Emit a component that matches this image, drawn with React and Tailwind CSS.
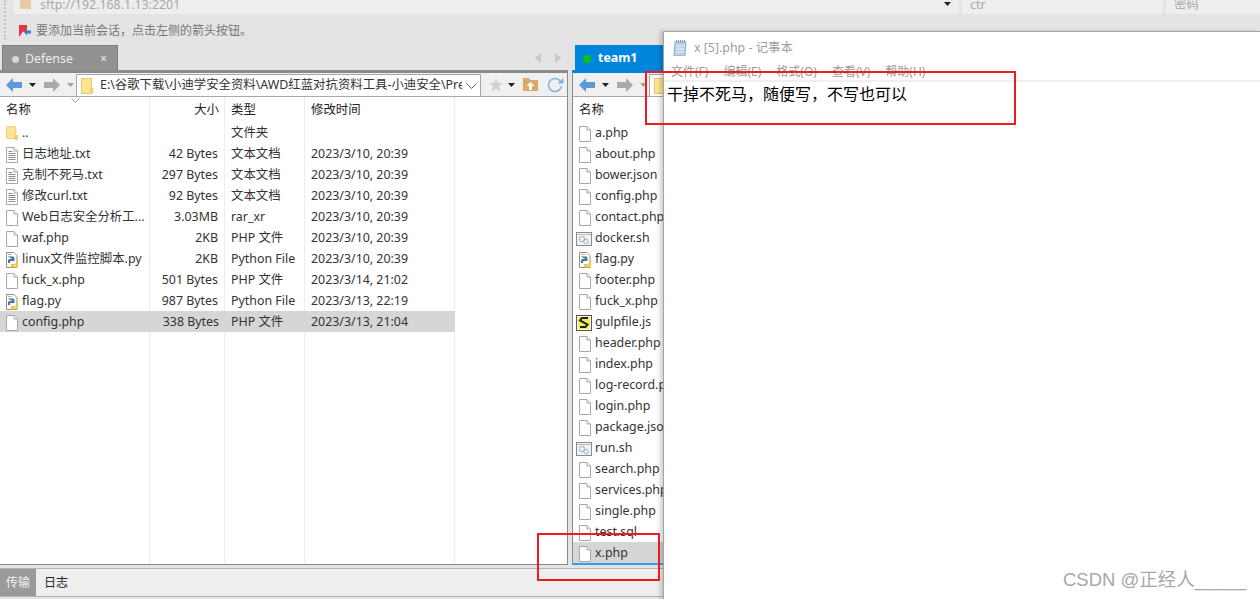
const uiFont = { fontFamily: '"Noto Sans", "Noto Sans CJK SC", sans-serif' };

const leftRows = [
  { name: "..", size: "", type: "文件夹", date: "", icon: "folder" },
  { name: "日志地址.txt", size: "42 Bytes", type: "文本文档", date: "2023/3/10, 20:39", icon: "txt" },
  { name: "克制不死马.txt", size: "297 Bytes", type: "文本文档", date: "2023/3/10, 20:39", icon: "txt" },
  { name: "修改curl.txt", size: "92 Bytes", type: "文本文档", date: "2023/3/10, 20:39", icon: "txt" },
  { name: "Web日志安全分析工...", size: "3.03MB", type: "rar_xr", date: "2023/3/10, 20:39", icon: "file" },
  { name: "waf.php", size: "2KB", type: "PHP 文件", date: "2023/3/10, 20:39", icon: "file" },
  { name: "linux文件监控脚本.py", size: "2KB", type: "Python File", date: "2023/3/10, 20:39", icon: "py" },
  { name: "fuck_x.php", size: "501 Bytes", type: "PHP 文件", date: "2023/3/14, 21:02", icon: "file" },
  { name: "flag.py", size: "987 Bytes", type: "Python File", date: "2023/3/13, 22:19", icon: "py" },
  { name: "config.php", size: "338 Bytes", type: "PHP 文件", date: "2023/3/13, 21:04", icon: "file", selected: true },
];

const rightRows = [
  ["a.php", "file"],
  ["about.php", "file"],
  ["bower.json", "file"],
  ["config.php", "file"],
  ["contact.php", "file"],
  ["docker.sh", "sh"],
  ["flag.py", "py"],
  ["footer.php", "file"],
  ["fuck_x.php", "file"],
  ["gulpfile.js", "js"],
  ["header.php", "file"],
  ["index.php", "file"],
  ["log-record.php", "file"],
  ["login.php", "file"],
  ["package.json", "file"],
  ["run.sh", "sh"],
  ["search.php", "file"],
  ["services.php", "file"],
  ["single.php", "file"],
  ["test.sql", "file"],
  ["x.php", "file"],
];

const menuItems = ["文件(F)", "编辑(E)", "格式(O)", "查看(V)", "帮助(H)"];

function FileIcon({ type }) {
  if (type === "folder") {
    return (
      <svg width="14" height="17" viewBox="0 0 14 17">
        <path d="M.5 1.5a1 1 0 0 1 1-1h9a1 1 0 0 1 1 1v13h-10a1 1 0 0 1-1-1z" fill="#fde58f" stroke="#e5c878" />
        <rect x="10.5" y="11" width="3" height="5" fill="#f3d16f" stroke="#e0bd62" strokeWidth=".6" />
      </svg>
    );
  }
  if (type === "sh") {
    return (
      <svg width="16" height="14" viewBox="0 0 16 14" className="-ml-0.5 shrink-0">
        <rect x=".5" y=".5" width="15" height="13" fill="#f3f3f3" stroke="#8a8a8a" />
        <path d="M1 2.500h14" stroke="#bbb" />
        <circle cx="6" cy="7" r="2.600" fill="none" stroke="#9aa4b0" strokeWidth="1.400" strokeDasharray="1.400 .8" />
        <circle cx="10" cy="9.500" r="2.200" fill="none" stroke="#7fb0d8" strokeWidth="1.300" strokeDasharray="1.300 .7" />
      </svg>
    );
  }
  if (type === "js") {
    return (
      <svg width="16" height="16" viewBox="0 0 16 16" className="-ml-0.5 shrink-0">
        <rect x=".5" y=".5" width="15" height="15" fill="#fff" stroke="#555" />
        <path d="M2 2h12v12H2z" fill="#f7ec55" />
        <path d="M12 3H6L4 5.500l7.500 4L9.500 12H4" fill="none" stroke="#222" strokeWidth="2" />
      </svg>
    );
  }
  if (type === "py") {
    return (
      <svg width="14" height="16" viewBox="0 0 14 16" className="shrink-0">
        <path d="M1.500.500h7.500l3 3v12h-10.500z" fill="#fff" stroke="#8f8f8f" />
        <path d="M3 2.500h4M3 4.500h6" stroke="#b5b5b5" />
        <path d="M3 11V8.500A1.500 1.500 0 0 1 4.500 7h2V6H4.500V5h4a1.500 1.500 0 0 1 1 1.500V9H6a1 1 0 0 0-1 1v1z" fill="#3f78a8" />
        <path d="M13 8v3.500a1.500 1.500 0 0 1-1.500 1.500H9.500v1H12v1.500H7a1.200 1.200 0 0 1-1-1.200V12h4a1 1 0 0 0 1-1V8z" fill="#f2c73b" />
      </svg>
    );
  }
  return (
    <svg width="12" height="16" viewBox="0 0 12 16" className="shrink-0">
      <path d="M.5.500h7.500l3.500 3.500v11.500h-11z" fill="#fff" stroke="#a8a8a8" />
      <path d="M8 .5v3.500h3.500" fill="#eee" stroke="#a8a8a8" />
      {type === "txt" && (
        <path d="M2.500 4.500h4M2.500 6.500h7M2.500 8.500h7M2.500 10.500h7M2.500 12.500h7" stroke="#8c8c8c" />
      )}
    </svg>
  );
}

function ToolArrow({ dir, color }) {
  return (
    <svg width="16" height="14" viewBox="0 0 16 14">
      <path
        d={dir === "left" ? "M0 7 7 0v4h9v6H7v4z" : "M16 7 9 0v4H0v6h9v4z"}
        fill={color}
      />
    </svg>
  );
}

function Caret({ color = "#222" }) {
  return (
    <svg width="7" height="4" viewBox="0 0 7 4">
      <path d="M0 0h7L3.500 4z" fill={color} />
    </svg>
  );
}

function PathToolbar({ children }) {
  return (
    <div className="flex h-6 items-center bg-[#f0f0f0] border-b border-[#a9a9a9]">
      <div className="flex w-[76px] shrink-0 items-center pl-1.5">
        <ToolArrow dir="left" color="#5b9bd5" />
        <span className="ml-[7px]"><Caret /></span>
        <span className="ml-[8px]"><ToolArrow dir="right" color="#a9a9a9" /></span>
        <span className="ml-[7px]"><Caret color="#a0a0a0" /></span>
      </div>
      {children}
    </div>
  );
}

function FolderSmall() {
  return (
    <svg width="13" height="16" viewBox="0 0 13 16" className="shrink-0">
      <path d="M.5.500h10v15H.500z" fill="#fde58f" stroke="#e2c678" />
      <rect x="9" y="10" width="3.500" height="5.500" fill="#f5d272" />
    </svg>
  );
}

function LeftList() {
  const cellBase = "h-[21px] flex items-center whitespace-nowrap pt-0.5";
  return (
    <div className="flex flex-1 text-[12.4px] text-[#333] leading-none">
      <div className="relative w-[150px] border-r border-[#e6eef7]">
        <div className="flex h-[25px] items-center pl-1.5 pt-0.5 text-[#222]">名称</div>
        <svg width="9" height="5" viewBox="0 0 9 5" className="absolute left-[71px] top-[1px]">
          <path d="M.5.500 4.500 4.500 8.500.500" fill="none" stroke="#999" />
        </svg>
        {leftRows.map((r) => (
          <div key={r.name} className={`${cellBase} gap-1 pl-1.5 ${r.selected ? "bg-[#d6d6d6] -mr-px" : ""}`}>
            <span className="flex w-3 justify-center"><FileIcon type={r.icon} /></span>
            <span>{r.name}</span>
          </div>
        ))}
      </div>
      <div className="w-[75px] border-r border-[#e6eef7]">
        <div className="flex h-[25px] items-center justify-end pr-[5px] pt-0.5 text-[#222]">大小</div>
        {leftRows.map((r) => (
          <div key={r.name} className={`${cellBase} justify-end pr-[6px] ${r.selected ? "bg-[#d6d6d6] -mr-px" : ""}`}>{r.size}</div>
        ))}
      </div>
      <div className="w-[80px] border-r border-[#e6eef7]">
        <div className="flex h-[25px] items-center pl-1.5 pt-0.5 text-[#222]">类型</div>
        {leftRows.map((r) => (
          <div key={r.name} className={`${cellBase} pl-1.5 ${r.selected ? "bg-[#d6d6d6] -mr-px" : ""}`}>{r.type}</div>
        ))}
      </div>
      <div className="w-[150px] border-r border-[#e6eef7]">
        <div className="flex h-[25px] items-center pl-1.5 pt-0.5 text-[#222]">修改时间</div>
        {leftRows.map((r) => (
          <div key={r.name} className={`${cellBase} pl-1.5 ${r.selected ? "bg-[#d6d6d6] -mr-px" : ""}`}>{r.date}</div>
        ))}
      </div>
    </div>
  );
}

export default function App() {
  return (
    <div className="relative flex h-[599px] w-[1260px] flex-col overflow-hidden bg-[#e4e4e4]" style={uiFont}>
      <div className="absolute left-1 top-0 h-10 border-l-2 border-dotted border-[#c4c4c4]" />

      {/* session bar, cut off by the screenshot */}
      <div className="flex h-3.5 shrink-0 gap-[3px] pl-3.5 text-[12.4px] leading-none text-[#aaa]">
        <div className="flex w-[945px] overflow-hidden bg-[#eeeeee] pl-1.5">
          <svg width="11" height="9" viewBox="0 0 11 9" className="shrink-0">
            <rect width="11" height="9" fill="#e8c9a0" />
          </svg>
          <span className="-mt-[1px] ml-[9px] flex-1">sftp://192.168.1.13:2201</span>
          <span className="mr-2 mt-0.5"><Caret /></span>
        </div>
        <div className="w-[201px] overflow-hidden bg-[#eeeeee] pl-2"><span className="-mt-[1px] block">ctr</span></div>
        <div className="flex-1 overflow-hidden bg-[#eeeeee] pl-2"><span className="-mt-[1px] block">密码</span></div>
      </div>

      <div className="flex h-[30px] shrink-0 items-center gap-[5px] pl-[19px] pt-[3px] text-xs text-[#777]">
        <svg width="12" height="12" viewBox="0 0 12 12">
          <path d="M0 0h8v9L4 6.500 0 12z" fill="#e8343c" />
          <path d="M5 6.500 8 4v1.500h4v3H8V11z" fill="#3f7fc4" />
        </svg>
        <span>要添加当前会话，点击左侧的箭头按钮。</span>
      </div>

      {/* tab strip */}
      <div className="flex h-[26px] shrink-0 pt-px">
        <div className="flex w-[570px] pl-0.5">
          <div className="flex w-[116px] items-center border border-b-0 border-[#7d7d7d] bg-[#929292] pl-[9px] pr-[10px] pt-0.5 text-[12.4px] text-[#eeeeee]">
            <span className="h-[7px] w-[7px] rounded-full bg-[#d8d8d8]" />
            <span className="ml-[6px] flex-1">Defense</span>
            <span className="text-xs">×</span>
          </div>
          <div className="flex flex-1 items-center justify-end gap-[14px] pr-[9px]">
            <svg width="6" height="10" viewBox="0 0 6 10"><path d="M6 0v10L0 5z" fill="#c8c8c8" /></svg>
            <svg width="6" height="10" viewBox="0 0 6 10"><path d="M0 0v10l6-5z" fill="#c8c8c8" /></svg>
          </div>
        </div>
        <div className="ml-[5px] flex flex-1 items-center gap-[7px] bg-[#0085dc] pl-2 pt-0.5 text-[12.4px] font-bold text-white">
          <span className="h-2 w-2 rounded-full bg-[#0cc40c]" />
          <span>team1</span>
        </div>
      </div>

      {/* file panels */}
      <div className="flex h-[495px] shrink-0 gap-1">
        <div className="flex w-[568px] flex-col border-r border-t-[3px] border-b border-[#8a8a8a] bg-white">
          <PathToolbar>
            <div className="flex h-[22px] w-[405px] items-center self-end border border-b-0 border-[#a6a6a6] bg-white pl-1 pr-[3px] text-[12.4px] text-[#333]">
              <FolderSmall />
              <span className="ml-1.5 flex-1 overflow-hidden whitespace-nowrap">E:\谷歌下载\小迪学安全资料\AWD红蓝对抗资料工具-小迪安全\Prep</span>
              <svg width="11" height="6" viewBox="0 0 11 6" className="ml-1 shrink-0"><path d="M.5.500 5.500 5.500 10.500.500" fill="none" stroke="#666" /></svg>
            </div>
            <div className="ml-2 flex items-center">
              <svg width="14" height="14" viewBox="0 0 14 14"><path d="m7 0 2 5h5l-4 3 1.500 5.500L7 10.500 2.500 13.500 4 8 0 5h5z" fill="#cfcfcf" /></svg>
              <span className="ml-[5px]"><Caret /></span>
              <svg width="15" height="13" viewBox="0 0 15 13" className="ml-2"><path d="M0 0h6l1 2h8v11H0z" fill="#dba868" /><path d="m7.500 4 4 4h-2.500v4H6V8H3.500z" fill="#fff" /></svg>
              <svg width="17" height="16" viewBox="0 0 17 16" className="ml-[9px]"><path d="M13.500 4.500A6.500 6.500 0 1 0 14.500 9" fill="none" stroke="#7fb3e0" strokeWidth="1.500" /><path d="M10.500 6.500h6V1z" fill="#7fb3e0" /></svg>
            </div>
          </PathToolbar>
          <LeftList />
        </div>

        <div className="flex flex-1 flex-col border-b-2 border-l border-t-[3px] border-l-[#8a8a8a] border-b-[#3c9be0] border-t-[#0085dc] bg-white">
          <PathToolbar>
            <div className="flex h-[22px] flex-1 items-center self-end border border-b-0 border-[#a6a6a6] bg-white pl-1 text-[13px]">
              <FolderSmall />
            </div>
          </PathToolbar>
          <div className="flex-1 text-[12.4px] leading-none text-[#333]">
            <div className="flex h-[25px] items-center pl-1.5 pt-0.5 text-[#222]">名称</div>
            {rightRows.map(([name, icon]) => (
              <div key={name} className={`flex h-[21px] items-center gap-1 whitespace-nowrap pl-1.5 pt-0.5 ${name === "x.php" ? "bg-[#d6d6d6]" : ""}`}>
                <span className="flex w-3 justify-center"><FileIcon type={icon} /></span>
                <span>{name}</span>
              </div>
            ))}
          </div>
        </div>
      </div>

      {/* bottom tabs */}
      <div className="mt-[3px] flex h-[29px] shrink-0 border-y border-[#b4b4b4] bg-[#eeeeee] text-xs">
        <div className="flex w-9 items-center justify-center bg-[#9a9a9a] text-[#f2f2f2]">传输</div>
        <div className="flex items-center pl-2 text-[#222]">日志</div>
      </div>

      {/* notepad window on top */}
      <div className="absolute bottom-0 left-[663px] right-0 top-[31px] border-l border-t border-[#a3a3a3] bg-white shadow-[-3px_0_4px_rgba(0,0,0,0.18)]">
        <div className="flex h-[30px] items-center pl-[9px] pt-0.5 text-[12.4px] text-[#a0a0a0]">
          <svg width="16" height="16" viewBox="0 0 16 16">
            <path d="M2 2h11l-1 14H1z" fill="#b9d3e2" stroke="#7d9fb5" strokeWidth=".8" />
            <path d="M3 1h10" stroke="#5b7a90" strokeWidth="1.500" strokeDasharray="1 1" />
            <path d="M3.500 6h8M3.300 9h8M3 12h8" stroke="#e8f2f7" />
          </svg>
          <span className="ml-[5px]">x [5].php - 记事本</span>
        </div>
        <div className="flex h-5 items-center gap-[15px] border-b-2 border-[#f0f0f0] pl-[7px] pt-0.5 text-xs text-[#999]">
          {menuItems.map((m) => (
            <span key={m}>{m}</span>
          ))}
        </div>
        <div className="pl-[3px] pt-px text-base leading-[22px] text-black">干掉不死马，随便写，不写也可以</div>
      </div>

      {/* annotations */}
      <div className="absolute left-[645px] top-[71px] h-[54px] w-[371px] border-2 border-[#ed1c24]" />
      <div className="absolute left-[537px] top-[533px] h-[48px] w-[123px] border-2 border-[#ed1c24]" />
      <div className="absolute left-[1063px] top-[568px] text-[18.5px] leading-6 text-[#a8a8a8]" style={{ fontFamily: '"Liberation Sans", "Noto Sans CJK SC", sans-serif' }}>
        CSDN @正经人_____
      </div>
    </div>
  );
}
